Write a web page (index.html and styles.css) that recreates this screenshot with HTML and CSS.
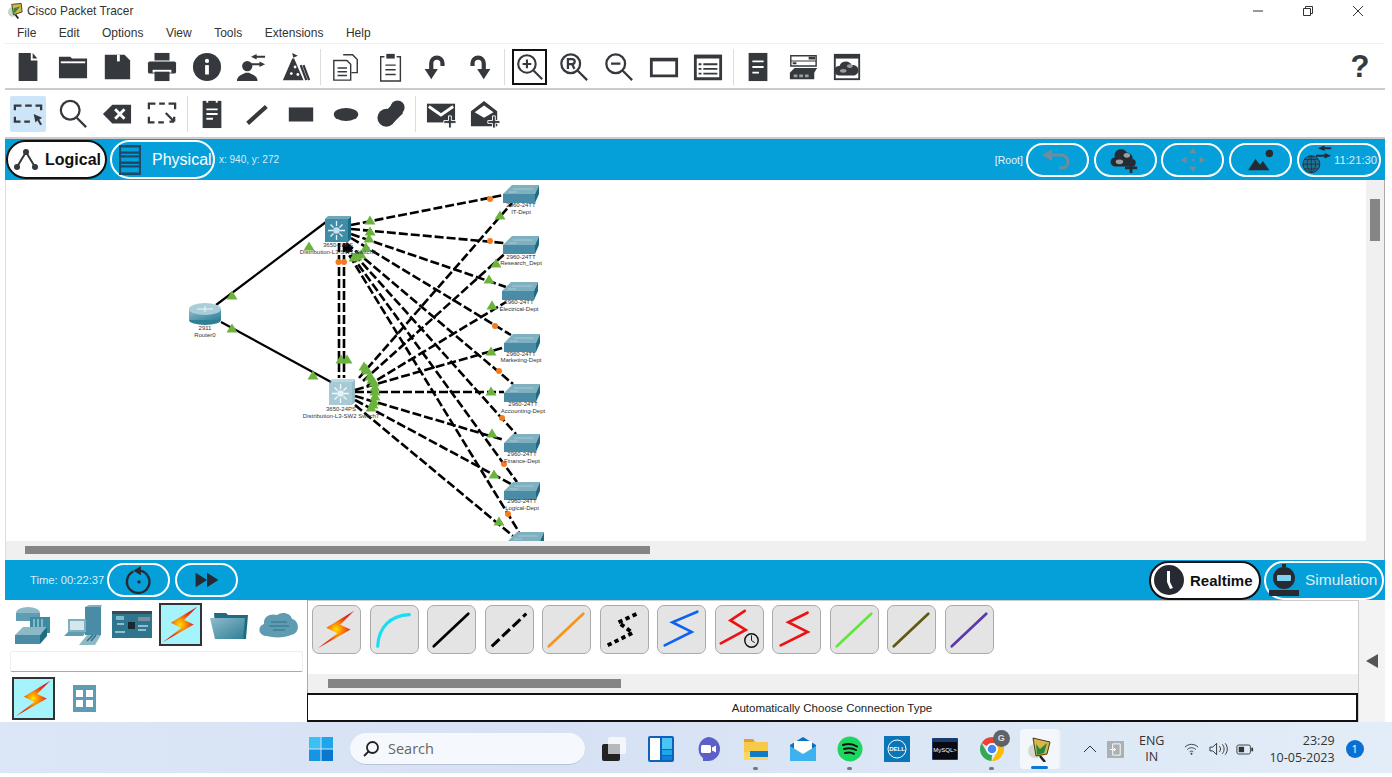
FILE: index.html
```html
<!DOCTYPE html>
<html lang="en">
<head>
<meta charset="utf-8">
<title>Cisco Packet Tracer</title>
<link rel="stylesheet" href="styles.css">
</head>
<body>
<svg class="sprite" aria-hidden="true">
  <defs>
    <radialGradient id="boltg" cx="50%" cy="50%" r="50%">
      <stop offset="0" stop-color="#ffe600"/><stop offset=".25" stop-color="#ffa000"/><stop offset=".7" stop-color="#ea3a14"/><stop offset="1" stop-color="#dc1c1c"/>
    </radialGradient>
    <linearGradient id="tealg" x1="0" y1="0" x2="1" y2="1">
      <stop offset="0" stop-color="#8fbccb"/><stop offset="1" stop-color="#2f7f97"/>
    </linearGradient>
    <symbol id="bolt" viewBox="0 0 44 44"><path d="M41 2 11 20l12 6L2 42l35-20-11-5z" fill="url(#boltg)"/></symbol>
  </defs>
</svg>
<div class="app">
  <header class="titlebar">
    <div class="title">
      <svg class="tapp" viewBox="0 0 18 18"><circle cx="6" cy="10" r="5" fill="#c9d4c8"/><path d="M5 2l10-1 1 9-9 3z" fill="#d9b64c" stroke="#4a3a12"/><path d="M7 6l3 3 4-5M7 6v6l3-3" fill="#2d8a3e"/><path d="M9 13l3 4" stroke="#222" stroke-width="2"/></svg>
      <span>Cisco Packet Tracer</span>
    </div>
    <div class="winbtns">
      <span class="win"><svg viewBox="0 0 12 12"><path d="M1 6h10" class="ln"/></svg></span>
      <span class="win"><svg viewBox="0 0 12 12"><path d="M1.5 3.5h7v7h-7zM3.5 3.5v-2h7v7h-2" class="ln"/></svg></span>
      <span class="win"><svg viewBox="0 0 12 12"><path d="M1 1l10 10M11 1 1 11" class="ln"/></svg></span>
    </div>
  </header>
  <nav class="menu"><span>File</span><span>Edit</span><span>Options</span><span>View</span><span>Tools</span><span>Extensions</span><span>Help</span></nav>

  <div class="tb tb1">
    <span class="btn"><svg viewBox="0 0 32 32" class="ic"><path d="M6 1h13v8h7v22H6zM21 1l5 6h-5z"/></svg></span>
    <span class="btn"><svg viewBox="0 0 32 32" class="ic"><path d="M1 5h12l2 2h16v21H1z"/><rect x="3" y="10" width="26" height="2" class="wh"/></svg></span>
    <span class="btn"><svg viewBox="0 0 32 32" class="ic"><path d="M3 3h21l6 6v20H3z"/><rect x="16" y="3" width="3" height="7" class="wh"/></svg></span>
    <span class="btn"><svg viewBox="0 0 32 32" class="ic"><rect x="8" y="1" width="16" height="8"/><rect x="1" y="10" width="30" height="13" rx="2"/><rect x="6" y="19" width="20" height="3" class="wh"/><rect x="8" y="21" width="16" height="10"/></svg></span>
    <span class="btn"><svg viewBox="0 0 32 32" class="ic"><circle cx="16" cy="16" r="15"/><rect x="14" y="14" width="4" height="10" class="wh"/><circle cx="16" cy="9.500" r="2.200" class="wh"/></svg></span>
    <span class="btn"><svg viewBox="0 0 32 32" class="ic"><circle cx="12" cy="15" r="5.500"/><path d="M1 31c0-6 6-7 9-9h4c3 2 9 3 9 9zM16 5l6-3v2h9v2h-9v2zM31 13l-6-3v2H15v2h10v2z"/></svg></span>
    <span class="btn"><svg viewBox="0 0 32 32" class="ic"><path d="M2 30 12 7h2l10 23zM12 1l6 3-5 2z"/><circle cx="11" cy="23" r="1.500" class="wh"/><circle cx="15" cy="16" r="1.500" class="wh"/><circle cx="18" cy="24" r="1.500" class="wh"/><path d="M24 14l6 16M21 14l6 16" class="st"/></svg></span>
    <span class="sep"></span>
    <span class="btn"><svg viewBox="0 0 32 32" class="ic"><path d="M13 3h10l5 5v14h-6M3 9h14l4 4v17H3zM7 17h10M7 21h10M7 25h10" class="st1"/></svg></span>
    <span class="btn"><svg viewBox="0 0 32 32" class="ic"><path d="M9 5H5v26h21V5h-4M10 14h11M10 19h11M10 24h11" class="st1"/><path d="M11 2h9v5h-9z"/></svg></span>
    <span class="btn"><svg viewBox="0 0 32 32" class="ic"><path d="M12 19v-7a6 6 0 0 1 12 0v3" class="thick"/><path d="M5 18h14l-7 11z"/></svg></span>
    <span class="btn"><svg viewBox="0 0 32 32" class="ic"><path d="M20 19v-7a6 6 0 0 0-12 0v3" class="thick"/><path d="M27 18H13l7 11z"/></svg></span>
    <span class="sep"></span>
    <span class="btn boxed"><svg viewBox="0 0 32 32" class="ic"><circle cx="12.500" cy="12.500" r="10" class="st"/><path d="M20 20l10 10M7.500 12.500h10M12.500 7.500v10" class="st"/></svg></span>
    <span class="btn"><svg viewBox="0 0 32 32" class="ic"><circle cx="12.500" cy="12.500" r="10" class="st"/><path d="M20 20l10 10M9.500 18V7.500h4.500a2.700 2.700 0 0 1 0 5.500h-4.500M14 13l2.500 5" class="st"/></svg></span>
    <span class="btn"><svg viewBox="0 0 32 32" class="ic"><circle cx="12.500" cy="12.500" r="10" class="st"/><path d="M20 20l10 10M7.500 12.500h10" class="st"/></svg></span>
    <span class="btn"><svg viewBox="0 0 32 32" class="ic"><path d="M2.500 7.500h27v18h-27z" class="st2"/><path d="M2 7h28v3H2z"/></svg></span>
    <span class="btn"><svg viewBox="0 0 32 32" class="ic"><path d="M2.500 4.500h27v24h-27z" class="st2"/><path d="M2 3h28v4H2zM6 12h3v2H6zM11 12h15v2H11zM6 17h3v2H6zM11 17h15v2H11zM6 22h3v2H6zM11 22h15v2H11z"/></svg></span>
    <span class="sep"></span>
    <span class="btn"><svg viewBox="0 0 32 32" class="ic"><rect x="6" y="1" width="20" height="30"/><path d="M10 9h12v2H10zM10 15h12v2H10zM10 21h7v2H10z" class="wh"/></svg></span>
    <span class="btn"><svg viewBox="0 0 32 32" class="ic"><path d="M3 4h27v11H3z" class="st1"/><path d="M3 9h27v1H3zM5 11h4v2H5zM22 5h7v3h-7zM7 17h24l-3 5H2zM2 22h26v7H2z"/><path d="M6 24h4v3H6zM12 24h4v3h-4zM18 24h4v3h-4z" class="gr"/></svg></span>
    <span class="btn"><svg viewBox="0 0 32 32" class="ic"><rect x="2" y="2" width="28" height="28"/><rect x="4" y="7" width="24" height="21" class="wh"/><path d="M7 25a5 5 0 0 1 1-10 7 7 0 0 1 13-1 5.500 5.500 0 0 1 3 11z"/><ellipse cx="12" cy="20" rx="3.500" ry="2" class="gr"/><ellipse cx="19" cy="15" rx="3" ry="2" class="gr"/></svg></span>
    <span class="help">?</span>
  </div>

  <div class="tb tb2">
    <span class="btn active"><svg viewBox="0 0 32 32" class="ic"><path d="M2 12V7h7M13 7h7M24 7h6v5M2 19v5h6M12 24h6M8 16" class="st"/><path d="M22 16l9 4-3 2 3 5-2 1-3-5-2 2z"/></svg></span>
    <span class="btn"><svg viewBox="0 0 32 32" class="ic"><circle cx="13" cy="12" r="10" class="st"/><path d="M20 20l10 10" class="st"/></svg></span>
    <span class="btn"><svg viewBox="0 0 32 32" class="ic"><path d="M1 16l10-10h20v20H11z"/><path d="M14 11l10 10M24 11 14 21" class="whst"/></svg></span>
    <span class="btn"><svg viewBox="0 0 32 32" class="ic"><path d="M2 11V5h7M13 5h6M23 5h7v6M2 19v6h6M12 25h6" class="st"/><path d="M20 15l9 9M29 24v-5M29 24h-5" class="st"/></svg></span>
    <span class="sep"></span>
    <span class="btn"><svg viewBox="0 0 32 32" class="ic"><path d="M6 2h20v29H6z"/><path d="M10 10h12v2H10zM10 15h12v2H10zM10 20h7v2H10zM10 0h2v4h-2zM20 0h2v4h-2z" class="wh"/></svg></span>
    <span class="btn"><svg viewBox="0 0 32 32" class="ic"><path d="M6 26 26 8" class="thick"/></svg></span>
    <span class="btn"><svg viewBox="0 0 32 32" class="ic"><rect x="3" y="9" width="26" height="15"/></svg></span>
    <span class="btn"><svg viewBox="0 0 32 32" class="ic"><ellipse cx="16" cy="16.500" rx="13" ry="7"/></svg></span>
    <span class="btn"><svg viewBox="0 0 32 32" class="ic"><circle cx="23" cy="9" r="7.500"/><circle cx="11" cy="20" r="9.500"/><path d="M17 6l12 9-12 12-9-12z"/></svg></span>
    <span class="sep"></span>
    <span class="btn"><svg viewBox="0 0 32 32" class="ic"><path d="M1 5h30v20H1z"/><path d="M3 8l13 9 13-9" class="whst"/><path d="M24 18h3v5h5v3h-5v5h-3v-5h-5v-3h5z" class="plus"/></svg></span>
    <span class="btn"><svg viewBox="0 0 32 32" class="ic"><path d="M1 13 15 2l14 11v16H1z"/><path d="M5 14l10-7 10 7-10 6z" class="wh"/><path d="M24 18h3v5h5v3h-5v5h-3v-5h-5v-3h5z" class="plus"/></svg></span>
  </div>

  <div class="bluebar top">
    <span class="pill on logical"><svg viewBox="0 0 26 24" class="pi"><path d="M4 19 13 4l9 15" class="node"/><circle cx="4" cy="19" r="3"/><circle cx="13" cy="4" r="3"/><circle cx="22" cy="19" r="3"/></svg><b>Logical</b></span>
    <span class="pill physical"><svg viewBox="0 0 24 32" class="pi2"><path d="M1 1h22v30H1zM1 8h22M1 12h22M1 19h22M1 23h22" class="rack"/></svg><span>Physical</span></span>
    <span class="coords">x: 940, y: 272</span>
    <span class="spring"></span>
    <span class="root">[Root]</span>
    <span class="pill small"><svg viewBox="0 0 32 24" class="pb"><path d="M4 7h16a7 7 0 0 1 7 7v0a6 6 0 0 1-6 6h-3" class="grayst"/><path d="M1 7l10-6v12z" class="grayf"/></svg></span>
    <span class="pill small"><svg viewBox="0 0 32 28" class="pb"><path d="M6 21a5 5 0 0 1-1-10 7 7 0 0 1 13-5 6 6 0 0 1 6 7 4 4 0 0 1-1 8z" class="dk"/><ellipse cx="10" cy="16" rx="4" ry="2.500" class="gr"/><ellipse cx="18" cy="9" rx="3.500" ry="2.500" class="gr"/><path d="M21 16h3v5h5v3h-5v5h-3v-5h-5v-3h5z" class="dk"/></svg></span>
    <span class="pill small"><svg viewBox="0 0 32 28" class="pb"><path d="M16 1l4 6h-8zM16 27l-4-6h8zM3 14l6-4v8zM29 14l-6 4v-8z" class="grayf"/><circle cx="16" cy="14" r="1.500" class="grayf"/></svg></span>
    <span class="pill small"><svg viewBox="0 0 32 28" class="pb"><path d="M2 25l8-12 5 6 3-4 7 10z" class="dk"/><circle cx="25" cy="7" r="4" class="dk"/></svg></span>
    <span class="pill time"><svg viewBox="0 0 34 30" class="globe"><circle cx="11" cy="20" r="9" class="glb"/><path d="M2 20h18M11 11v18M4 15h14M4 25h14M11 11c-6 5-6 13 0 18M11 11c6 5 6 13 0 18" class="glbl"/><path d="M18 3l7-3v2h7v2h-7v2zM32 11l-7-3v2H16v2h9v2z" class="dk"/></svg><span>11:21:30</span></span>
  </div>

  <section class="canvas">
    <div class="canvasmain">
      <div class="stage">
        <svg class="diagram" viewBox="5 180 1361 361" width="1361" height="361">
          <defs>
            <g id="sw">
              <path d="M0 9 9 0h27l-4 9z" fill="#7fb0c0"/>
              <path d="M10 4h20M6 7h8" stroke="#b9d6df" stroke-width=".7"/>
              <path d="M0 9h32v9H0z" fill="#4a8ba6"/>
              <path d="M32 9l4-9v9l-4 9z" fill="#1f6b82"/>
            </g>
            <g id="l3">
              <path d="M0 3h23l3-3v23l-3 3H0z" fill="#1f6b82"/>
              <path d="M0 3l3-3h23l-3 3z" fill="#6fa8ba"/>
              <rect y="3" width="23" height="23" fill="#3f8ca6"/>
              <path d="M11.500 5v5M11.500 19v5M3 14.500h5M15 14.500h5M5.500 8.500l3 3M17.500 8.500l-3 3M5.500 20.500l3-3M17.500 20.500l-3-3" stroke="#e6f3f7" stroke-width="1.300"/>
              <circle cx="11.500" cy="14.500" r="3.300" fill="#c4e2ec"/>
            </g>
            <path id="g" d="M0-5.500 5.500 3.500H-5.500z" fill="#6cb33e"/>
            <circle id="o" r="3" fill="#f47b20"/>
          </defs>
          <g class="solid">
            <path d="M215 305 325 222M220 322 330 382"/>
          </g>
          <g class="dash">
            <path d="M338 243V378M343 243V378"/>
            <path d="M350 225 503 195M350 229 503 243M350 234 505 287M350 238 510 335M345 243 512 384M345 245 515 434M343 245 516 482M342 245 518 532"/>
            <path d="M358 378 511 203M362 381 508 250M366 386 505 302M354 390 505 347M354 392H503M354 396 503 440M354 400 510 484M354 405 512 536"/>
          </g>
          <ellipse cx="204" cy="320" rx="16" ry="5" fill="#2f7f97"/>
          <rect x="188" y="309" width="32" height="11" fill="url(#tealg)"/>
          <ellipse cx="204" cy="309" rx="16" ry="6" fill="#a9cdd9"/>
          <path d="M196 309h16M204 306v6" stroke="#eef7fa" stroke-width="1"/>
          <use href="#l3" x="324" y="216"/>
          <use href="#l3" x="328" y="379" class="pale"/>
          <use href="#sw" x="502" y="185"/>
          <use href="#sw" x="502" y="236"/>
          <use href="#sw" x="501" y="282"/>
          <use href="#sw" x="503" y="334"/>
          <use href="#sw" x="503" y="384"/>
          <use href="#sw" x="503" y="434"/>
          <use href="#sw" x="503" y="482"/>
          <use href="#sw" x="507" y="532"/>
          <use href="#g" x="231" y="296"/><use href="#g" x="308" y="247"/><use href="#g" x="231" y="329"/><use href="#g" x="312" y="376"/>
          <use href="#g" x="340" y="360"/><use href="#g" x="346" y="360"/>
          <use href="#g" x="369" y="221"/><use href="#g" x="369" y="232"/><use href="#g" x="368" y="239"/><use href="#g" x="365" y="248"/><use href="#g" x="360" y="255"/><use href="#g" x="356" y="257"/><use href="#g" x="353" y="258"/>
          <use href="#g" x="488" y="280"/><use href="#g" x="499" y="216"/><use href="#g" x="495" y="264"/><use href="#g" x="491" y="306"/><use href="#g" x="490" y="352"/><use href="#g" x="490" y="392"/><use href="#g" x="491" y="434"/><use href="#g" x="493" y="475"/><use href="#g" x="498" y="522"/>
          <use href="#g" x="363" y="367"/><use href="#g" x="365" y="369"/><use href="#g" x="366" y="371"/><use href="#g" x="369" y="377"/><use href="#g" x="371" y="380"/><use href="#g" x="373" y="383"/><use href="#g" x="374" y="388"/><use href="#g" x="374" y="392"/><use href="#g" x="374" y="397"/><use href="#g" x="373" y="402"/><use href="#g" x="372" y="405"/><use href="#g" x="370" y="408"/>
          <use href="#o" x="337.500" y="262"/><use href="#o" x="343" y="262"/><use href="#o" x="489" y="199"/><use href="#o" x="489" y="241"/><use href="#o" x="494" y="326"/><use href="#o" x="498" y="371"/><use href="#o" x="501" y="418"/><use href="#o" x="503" y="464"/><use href="#o" x="507" y="514"/>
          <g class="lbl">
            <text x="204" y="330">2911</text><text x="204" y="337">Router0</text>
            <text x="337" y="247">3650-24PS</text><text x="337" y="254">Distribution-L3-SW1 Switch6</text>
            <text x="340" y="411">3650-24PS</text><text x="340" y="418">Distribution-L3-SW2 Switch7</text>
            <text x="520" y="207">2960-24TT</text><text x="520" y="214">IT-Dept</text>
            <text x="520" y="259">2960-24TT</text><text x="520" y="265">Research_Dept</text>
            <text x="518" y="304">2960-24TT</text><text x="518" y="311">Electrical-Dept</text>
            <text x="520" y="356">2960-24TT</text><text x="520" y="362">Marketing-Dept</text>
            <text x="522" y="406">2960-24TT</text><text x="522" y="413">Accounting-Dept</text>
            <text x="521" y="456">2960-24TT</text><text x="521" y="463">Finance-Dept</text>
            <text x="521" y="503">2960-24TT</text><text x="521" y="510">Logical-Dept</text>
          </g>
        </svg>
      </div>
      <div class="hscroll"><span class="hthumb"></span></div>
    </div>
    <div class="vscroll"><span class="vthumb"></span></div>
  </section>

  <div class="bluebar bottom">
    <span class="timetxt">Time: 00:22:37</span>
    <span class="pill small"><svg viewBox="0 0 32 32" class="pb2"><path d="M10 7a12 12 0 1 0 7-1" class="dkst"/><path d="M18 1v10l-8-5z" class="dk"/><circle cx="16" cy="18" r="1.800" class="dk"/></svg></span>
    <span class="pill small"><svg viewBox="0 0 32 24" class="pb3"><path d="M2 3l14 9-14 9zM16 3l14 9-14 9z" class="dk"/></svg></span>
    <span class="spring"></span>
    <span class="pill on realtime"><svg viewBox="0 0 32 32" class="pc"><circle cx="16" cy="16" r="15" class="dk"/><path d="M14 7h3v11l3 6-3 1-3-7z" class="wh"/></svg><b>Realtime</b></span>
    <span class="pill simulation"><svg viewBox="0 0 32 32" class="pc"><circle cx="16" cy="14" r="11" class="dk"/><rect x="14" y="0" width="4" height="3" class="dk"/><rect x="9" y="11" width="14" height="6" rx="1" class="simw"/><rect x="1" y="26" width="30" height="6" class="dk"/></svg><span>Simulation</span></span>
  </div>

  <section class="bottompanel">
    <div class="leftpanel">
      <div class="cats">
        <span class="cat"><svg viewBox="0 0 40 40"><ellipse cx="14" cy="8" rx="12" ry="6" fill="#8db8c6"/><path d="M2 8v8h24V8" fill="#5e9db2"/><path d="M16 12h20v16H16z" fill="#3f8aa3"/><path d="M20 14v12M24 14v12M28 14v12" stroke="#cfe5ec"/><path d="M1 30l8-8h24l-7 8z" fill="#8db8c6"/><path d="M1 30h25v9H1z" fill="#4a8ba6"/><path d="M26 30l7-8v9l-7 8z" fill="#1f6b82"/></svg></span>
        <span class="cat"><svg viewBox="0 0 40 40"><path d="M22 2h16v28H22z" fill="#4a8ba6"/><path d="M22 2l4-2h13l-1 2z" fill="#7fb0c0"/><path d="M5 14h18v13H5z" fill="#7fb0c0"/><path d="M7 16h14v9H7z" fill="#d5e6ec"/><path d="M1 31l4-4h18l-3 4z" fill="#5e9db2"/><path d="M16 40l8-10h14l-6 10z" fill="#8db8c6"/><path d="M24 36l6-6M28 36l5-6" stroke="#2f6f84" stroke-width="1.500"/></svg></span>
        <span class="cat"><svg viewBox="0 0 40 30" class="board"><rect width="40" height="27" y="1" fill="#2e7690"/><rect y="1" width="40" height="3" fill="#3c4a50"/><rect x="16" y="12" width="7" height="7" fill="#1c2830"/><rect x="26" y="7" width="12" height="4" fill="#7c8f96"/><rect x="4" y="6" width="8" height="4" fill="#84b8c8"/><path d="M3 22h10M26 16h10M26 20h8M5 14h7" stroke="#b7d5de" stroke-width="1.500"/></svg></span>
        <span class="cat picked"><svg><use href="#bolt"/></svg></span>
        <span class="cat"><svg viewBox="0 0 40 30" class="board"><path d="M4 3h12l2 2h20l-2 24H6z" fill="#1f6b82"/><path d="M0 8h32l3 0-2 21H5z" fill="url(#tealg)"/></svg></span>
        <span class="cat"><svg viewBox="0 0 40 30" class="board"><path d="M8 26c-9 0-10-10-3-12C4 6 12 3 18 5c5-4 14-2 15 4 7 1 9 14-1 16-6 3-18 3-24 1z" fill="#5f9bb1"/><path d="M12 12h16M10 16h20M14 20h12" stroke="#3f7f97" stroke-width="1.500"/></svg></span>
      </div>
      <div class="searchbox"></div>
      <div class="subcats">
        <span class="cat picked"><svg><use href="#bolt"/></svg></span>
        <span class="gridicon"><i></i><i></i><i></i><i></i></span>
      </div>
    </div>
    <div class="connpanel">
      <div class="conns">
        <span class="conn"><svg class="bolt2"><use href="#bolt"/></svg></span>
        <span class="conn"><svg viewBox="0 0 49 49"><path d="M7 42C8 22 20 10 40 9" stroke="#19dcf5" class="c35"/></svg></span>
        <span class="conn"><svg viewBox="0 0 49 49"><path d="M6 42 42 8" stroke="#000" class="c3"/></svg></span>
        <span class="conn"><svg viewBox="0 0 49 49"><path d="M6 42 42 8" stroke="#000" class="c3 cdash"/></svg></span>
        <span class="conn"><svg viewBox="0 0 49 49"><path d="M6 42 42 8" stroke="#f7941d" class="c3"/></svg></span>
        <span class="conn"><svg viewBox="0 0 49 49"><path d="M7 41l26-13-15-11L40 7" stroke="#000" class="c35 cdot"/></svg></span>
        <span class="conn"><svg viewBox="0 0 49 49"><path d="M7 41l28-14-20-10L41 6" stroke="#0f62f0" class="c3"/></svg></span>
        <span class="conn"><svg viewBox="0 0 49 49"><path d="M5 39l26-14-16-10L30 5" stroke="#ee1111" class="c3"/><circle cx="37" cy="36" r="7" fill="#e4e4e4" stroke="#111" stroke-width="1.500"/><path d="M37 31v5l3 2" stroke="#111" class="c1"/></svg></span>
        <span class="conn"><svg viewBox="0 0 49 49"><path d="M8 41l28-14-20-10L36 7" stroke="#ee1111" class="c3"/></svg></span>
        <span class="conn"><svg viewBox="0 0 49 49"><path d="M6 42 42 8" stroke="#62e63c" class="c3"/></svg></span>
        <span class="conn"><svg viewBox="0 0 49 49"><path d="M6 42 42 8" stroke="#5f5a12" class="c3"/></svg></span>
        <span class="conn"><svg viewBox="0 0 49 49"><path d="M6 42 42 8" stroke="#5c38a8" class="c3"/></svg></span>
      </div>
      <div class="connscroll"><span class="connthumb"></span></div>
      <div class="status">Automatically Choose Connection Type</div>
    </div>
    <div class="collapse"><span class="tri"></span></div>
  </section>
</div>

<footer class="taskbar">
  <svg class="start" viewBox="0 0 24 24"><rect width="11.500" height="11.500" fill="#3cc0f4"/><rect x="12.500" width="11.500" height="11.500" fill="#1ea5ea"/><rect y="12.500" width="11.500" height="11.500" fill="#1595e2"/><rect x="12.500" y="12.500" width="11.500" height="11.500" fill="#0b78d0"/></svg>
  <div class="tsearch"><svg viewBox="0 0 18 18"><circle cx="10.500" cy="7.500" r="5.500" class="tsst"/><path d="M6.500 11.500 2 16" class="tsst"/></svg><span>Search</span></div>
  <div class="ticons">
    <span class="ti"><svg viewBox="0 0 26 26"><rect x="1" y="8" width="18" height="17" rx="2" fill="#222"/><rect x="7" y="1" width="18" height="17" rx="2" fill="#f4f6f9"/><rect x="7" y="8" width="12" height="10" fill="#b6b8bc"/></svg></span>
    <span class="ti"><svg viewBox="0 0 26 26"><rect width="26" height="26" rx="2" fill="#0f62b8"/><rect x="2" y="2" width="10" height="22" fill="#fff"/><rect x="14" y="2" width="10" height="11" fill="#4cc5f5"/><rect x="14" y="14" width="10" height="5" fill="#1ea5ea"/><rect x="14" y="20" width="10" height="4" fill="#1080d8"/></svg></span>
    <span class="ti"><svg viewBox="0 0 26 26"><path d="M13 1a12 12 0 0 1 0 24H8v-3a12 12 0 0 1 5-21z" fill="#5b5fc7"/><rect x="6" y="9" width="10" height="8" rx="1.500" fill="#fff"/><path d="M17 11.500l4-2v7l-4-2z" fill="#fff"/></svg></span>
    <span class="ti dot"><svg viewBox="0 0 26 26"><path d="M1 3h9l2 3h13v18H1z" fill="#f7c948"/><path d="M1 3h9l2 3H1z" fill="#e2a11f"/><path d="M1 16h24v8H1z" fill="#fbd75b"/><rect x="7" y="15" width="18" height="6" fill="#0f7cc8"/></svg></span>
    <span class="ti"><svg viewBox="0 0 26 26"><path d="M13 1 26 9v15H0V9z" fill="#0a6fc2"/><path d="M4 5h18v10l-9 5-9-5z" fill="#fff"/><path d="M0 10l13 8 13-8v15H0z" fill="#3db2ef"/></svg></span>
    <span class="ti dot"><svg viewBox="0 0 26 26"><circle cx="13" cy="13" r="12.500" fill="#1ed760"/><path d="M6 9c5-1.500 10-1 14 1.500M7 13c4-1 9-.7 12 1M8 17c3-.8 7-.5 9 .8" class="spot"/></svg></span>
    <span class="ti"><svg viewBox="0 0 26 26"><rect width="26" height="26" fill="#0a76b8"/><circle cx="13" cy="13" r="9" fill="none" stroke="#fff"/><text x="13" y="15" class="dell">DELL</text></svg></span>
    <span class="ti"><svg viewBox="0 0 26 26"><rect width="26" height="22" y="2" rx="1" fill="#1d3a6e"/><rect x="1" y="6" width="24" height="17" fill="#0a0a12"/><text x="13" y="16" class="mysql">MySQL&gt;</text></svg></span>
    <span class="ti dot chrome"><svg viewBox="0 0 26 26"><path d="M13 1a12 12 0 0 1 10.400 6H13a6 6 0 0 0-5.200 3L2.600 7A12 12 0 0 1 13 1z" fill="#ea4335"/><path d="M23.400 7A12 12 0 0 1 13 25l5.200-9A6 6 0 0 0 17 9z" fill="#fbbc05"/><path d="M2.600 7l5.200 9a6 6 0 0 0 5.200 3l-.5 6A12 12 0 0 1 2.600 7z" fill="#34a853"/><circle cx="13" cy="13" r="5" fill="#4285f4" stroke="#fff" stroke-width="1.500"/></svg><b class="gbadge">G</b></span>
    <span class="ti current"><svg viewBox="0 0 26 26"><circle cx="9" cy="15" r="7" fill="#d2dad0"/><path d="M7 2l17 4-3 12-11 2z" fill="#d9b64c" stroke="#4a3a12"/><path d="M10 8l4 5 7-6-3 10-7 2z" fill="#1f8a3e"/><path d="M14 20l5 6" stroke="#222" stroke-width="2.500"/></svg></span>
  </div>
  <div class="tray">
    <svg class="chev" viewBox="0 0 14 8"><path d="M1 7l6-6 6 6" class="thin"/></svg>
    <span class="traybox"><svg viewBox="0 0 16 16"><path d="M5 2h8v12H5zM2 8h6M6 6l2 2-2 2" class="thinw"/></svg></span>
    <span class="lang">ENG<br>IN</span>
    <svg class="wifi" viewBox="0 0 16 12"><path d="M1 4c4-4 10-4 14 0M3.500 6.500c3-2.500 6-2.500 9 0M6 9c1.300-1 2.700-1 4 0" class="thin"/><circle cx="8" cy="11" r="1" class="tk"/></svg>
    <svg class="spk" viewBox="0 0 20 14"><path d="M1 5h3l4-4v12L4 9H1zM11 4c1.500 2 1.500 4 0 6M14 2c2.500 3 2.500 7 0 10M17 1c3 3.500 3 8.500 0 12" class="thin"/></svg>
    <svg class="bat" viewBox="0 0 20 12"><rect x="1" y="1" width="15" height="10" rx="2" class="thin"/><rect x="3" y="3" width="6" height="6" class="tk"/><rect x="17" y="4" width="2" height="4" class="tk"/></svg>
    <span class="clock">23:29<br>10-05-2023</span>
    <span class="badge">1</span>
  </div>
</footer>
</body>
</html>
```

FILE: styles.css
```css
* { box-sizing: border-box; }
html, body { margin: 0; padding: 0; }
body {
  width: 1392px;
  height: 777px;
  overflow: hidden;
  background: #fff;
  font-family: "Liberation Sans", Arial, sans-serif;
  color: #222;
}
svg { display: block; }
.sprite { width: 0; height: 0; }
.app { width: 1380px; margin-left: 5px; display: flex; flex-direction: column; height: 722px; }

.titlebar { height: 22px; display: flex; justify-content: space-between; align-items: center; padding-right: 2px; }
.title { display: flex; align-items: center; gap: 3px; font-size: 11.900px; color: #333; padding-left: 2px; }
.tapp { width: 17px; height: 18px; }
.winbtns { display: flex; }
.win { width: 50px; display: flex; justify-content: center; }
.win svg { width: 12px; height: 12px; }
.ln { fill: none; stroke: #333; stroke-width: 1; }

.menu { height: 22px; display: flex; gap: 22.500px; align-items: center; padding-left: 12px; font-size: 12px; color: #333; border-bottom: 1px solid #f0f0f0; }

.tb { display: flex; align-items: center; padding-left: 1px; background: #fff; border-bottom: 2px solid #ccc; }
.tb1 { height: 46px; padding-top: 2px; }
.tb2 { height: 49px; padding-left: 1px; }
.btn { width: 44.600px; height: 36px; display: flex; align-items: center; justify-content: center; flex: none; }
.btn svg { width: 30px; height: 30px; }
.sep { width: 5.500px; height: 36px; flex: none; background: linear-gradient(#ddd, #ddd) center / 1px 100% no-repeat; }
.boxed { width: 35px; margin: 0 4.800px; border: 2px solid #111; }
.boxed svg { width: 28px; height: 28px; }
.active { width: 36px; margin: 0 4.300px; background: #cde5f9; border-radius: 2px; }
.help { margin-left: auto; width: 50px; text-align: center; font-size: 31px; font-weight: 700; color: #35383c; padding-right: 0; }

.ic { fill: #35383c; }
.wh { fill: #fff; }
.gr { fill: #9a9da0; }
.st { fill: none; stroke: #35383c; stroke-width: 2.400; }
.st1 { fill: none; stroke: #35383c; stroke-width: 1.500; }
.st2 { fill: none; stroke: #35383c; stroke-width: 3; }
.thick { fill: none; stroke: #35383c; stroke-width: 4.500; }
.whst { fill: none; stroke: #fff; stroke-width: 3; }
.plus { fill: #35383c; stroke: #fff; stroke-width: 1; }

.bluebar { background: #059fd9; display: flex; align-items: center; color: #fff; flex: none; }
.top { height: 41px; padding-left: 1px; }
.bottom { height: 40px; padding-left: 25px; padding-right: 1px; }
.spring { flex: 1; }
.pill { height: 34px; border: 2px solid #fff; border-radius: 18px; display: flex; align-items: center; flex: none; font-size: 16px; }
.pill.on { height: 39px; background: #fff; border-color: #111; border-radius: 20px; color: #111; }
.logical { width: 101px; padding-left: 5px; gap: 6px; }
.physical { width: 105px; margin-left: 3px; padding-left: 7px; gap: 11px; height: 39px; border-radius: 20px; }
.pi { width: 26px; height: 24px; fill: #35383c; }
.node { fill: none; stroke: #35383c; stroke-width: 2; }
.pi2 { width: 22px; height: 30px; }
.rack { fill: none; stroke: #1c4a68; stroke-width: 2.500; }
.coords { font-size: 10px; margin-left: 4px; color: #d7eef8; }
.root { font-size: 10.500px; color: #e3f3fa; margin-right: 3px; }
.small { width: 63px; justify-content: center; margin-right: 4.800px; }
.top .time { width: 84px; padding-left: 2px; gap: 1px; font-size: 11.300px; color: #d7eef8; margin-right: 4px; }
.pb { width: 32px; height: 26px; }
.pb2 { width: 30px; height: 30px; }
.pb3 { width: 26px; height: 20px; }
.globe { width: 32px; height: 29px; flex: none; }
.grayst { fill: none; stroke: #6f8d9b; stroke-width: 3; }
.grayf { fill: #6f8d9b; }
.dk { fill: #262b33; }
.dkst { fill: none; stroke: #262b33; stroke-width: 2.500; }
.glb { fill: #1c7398; stroke: #262b33; stroke-width: 1; }
.glbl { fill: none; stroke: #262b33; stroke-width: .8; }
.simw { fill: #7fd0f0; }

.canvas { height: 380px; display: flex; flex: none; border-right: 1px solid #aaa; }
.canvasmain { width: 1361px; display: flex; flex-direction: column; border-left: 1px solid #ddd; }
.stage { height: 361px; overflow: hidden; background: #fff; }
.hscroll { height: 19px; background: #f0f0f0; padding: 5px 0 0 19px; }
.hthumb { display: block; width: 625px; height: 8px; background: #858585; }
.vscroll { width: 18px; background: #f0f0f0; padding: 19px 0 0 4px; }
.vthumb { display: block; width: 10px; height: 42px; background: #858585; }

.solid path { fill: none; stroke: #000; stroke-width: 2.200; }
.dash path { fill: none; stroke: #000; stroke-width: 2.600; stroke-dasharray: 9 3; }
.pale { opacity: .45; }
.lbl text { font-size: 6px; text-anchor: middle; fill: #333; }

.bottompanel { height: 122px; display: flex; flex: none; }
.leftpanel { width: 302px; flex: none; padding: 3px 0 0 4px; }
.cats { display: flex; height: 43px; align-items: center; }
.cat { width: 49px; height: 43px; display: flex; align-items: center; justify-content: center; flex: none; }
.cat svg { width: 40px; height: 40px; }
.cat svg.board { height: 30px; }
.picked { width: 43px; margin: 0 3px; background: #a5f3fb; border: 2px solid #333; }
.picked svg { width: 39px; height: 39px; }
.searchbox { width: 293px; height: 21px; margin: 5px 0 5px 1px; border: 1px solid #eee; border-bottom: 1px solid #aaa; border-radius: 2px; }
.subcats { display: flex; align-items: center; gap: 18px; padding-left: 3px; }
.subcats .picked { margin: 0; }
.gridicon { width: 23px; height: 27px; background: #5f9bb3; display: grid; grid-template-columns: 7px 7px; gap: 3px; align-content: center; justify-content: center; }
.gridicon i { height: 7px; background: #fff; }

.connpanel { width: 1051px; flex: none; display: flex; flex-direction: column; border-left: 1px solid #aaa; }
.conns { height: 74px; display: flex; gap: 8.500px; padding: 4px 0 0 4px; border-top: 1px solid #ccc; }
.conn { width: 49px; height: 49px; background: #e4e4e4; border: 1px solid #aaa; border-radius: 7px; flex: none; }
.conn svg { width: 47px; height: 47px; }
.bolt2 { padding: 3px; }
.c3, .c35, .c1 { fill: none; stroke-linecap: round; }
.c3 { stroke-width: 2.800; }
.c35 { stroke-width: 3.300; }
.c1 { stroke-width: 1; }
.c3.cdash { stroke-linecap: butt; stroke-dasharray: 11 4; stroke-width: 3.200; }
.c35.cdot { stroke-linecap: butt; stroke-dasharray: 4.500 3.500; stroke-width: 4; }
.connscroll { height: 19px; background: #f0f0f0; padding: 5px 0 0 20px; }
.connthumb { display: block; width: 293px; height: 9px; background: #858585; }
.status { height: 29px; border: 2px solid #111; border-left-width: 1px; font-size: 11.500px; text-align: center; line-height: 26px; color: #222; margin-left: -1px; }
.collapse { flex: 1; background: #f3f3f3; display: flex; align-items: center; justify-content: center; border-left: 1px solid #ccc; }
.tri { width: 0; height: 0; border-style: solid; border-width: 7px 12px 7px 0; border-color: transparent #555 transparent transparent; }

.timetxt { font-size: 11.200px; color: #d7eef8; margin-right: 3px; }
.realtime { width: 112px; padding-left: 2px; gap: 5px; font-size: 15px; margin-right: 3px; }
.simulation { width: 120px; height: 39px; border-radius: 20px; padding-left: 2px; gap: 5px; color: #d9f0fa; font-size: 15.500px; }
.pc { width: 32px; height: 32px; flex: none; }

.taskbar { height: 51px; display: flex; align-items: center; padding: 3px 0 0 309px; background: linear-gradient(90deg, #dbe6f6, #d6e1f4 40%, #e2edf8); }
.start { width: 24px; height: 24px; flex: none; }
.tsearch { width: 235px; height: 32px; margin-left: 17px; flex: none; background: #f5f8fd; border-radius: 16px; border-bottom: 1px solid #b8c4d8; display: flex; align-items: center; gap: 8px; padding-left: 12px; font-family: "Open Sans", "Noto Sans", sans-serif; font-size: 14.500px; color: #666; }
.tsearch svg { width: 18px; height: 18px; flex: none; }
.tsst { fill: none; stroke: #222; stroke-width: 1.800; }
.ticons { display: flex; margin-left: 5px; }
.ti { width: 47.300px; height: 40px; flex: none; display: flex; align-items: center; justify-content: center; position: relative; }
.ti svg { width: 26px; height: 26px; }
.dot::after { content: ""; position: absolute; bottom: -1px; left: 21px; width: 5px; height: 3px; border-radius: 2px; background: #777; }
.current { background: #f3f7fc; border-radius: 4px; width: 39px; margin: 0 4px; box-shadow: 2px 0 0 #e8eff8; }
.current::after { content: ""; position: absolute; bottom: 0; left: 11px; width: 17px; height: 3px; border-radius: 2px; background: #0a78d4; }
.gbadge { position: absolute; top: 1px; right: 6px; width: 17px; height: 17px; border-radius: 50%; background: #5f6368; color: #ddd; font-size: 9px; line-height: 17px; text-align: center; font-weight: 700; }
.spot { fill: none; stroke: #111; stroke-width: 2; stroke-linecap: round; }
.dell { font-size: 6px; font-weight: 700; text-anchor: middle; fill: #fff; }
.mysql { font-size: 6px; text-anchor: middle; fill: #fff; }
.tray { display: flex; align-items: center; font-family: "Open Sans", "Noto Sans", sans-serif; color: #333; margin-left: 20px; }
.chev { width: 14px; height: 8px; flex: none; }
.thin { fill: none; stroke: #333; stroke-width: 1; }
.thinw { fill: none; stroke: #fff; stroke-width: 1; }
.tk { fill: #333; }
.traybox { width: 17px; height: 17px; margin-left: 10px; background: #aab0b4; display: flex; align-items: center; justify-content: center; }
.traybox svg { width: 15px; height: 15px; }
.lang { width: 40px; margin-left: 8px; text-align: center; font-size: 12.500px; line-height: 16px; }
.wifi { width: 15px; height: 12px; margin-left: 12px; }
.spk { width: 19px; height: 14px; margin-left: 10px; }
.bat { width: 18px; height: 11px; margin-left: 8px; }
.clock { width: 81px; text-align: right; font-size: 12.500px; line-height: 17px; }
.badge { width: 18px; height: 18px; margin-left: 11px; border-radius: 50%; background: #0a6fd4; color: #fff; font-size: 11px; line-height: 18px; text-align: center; }
```
